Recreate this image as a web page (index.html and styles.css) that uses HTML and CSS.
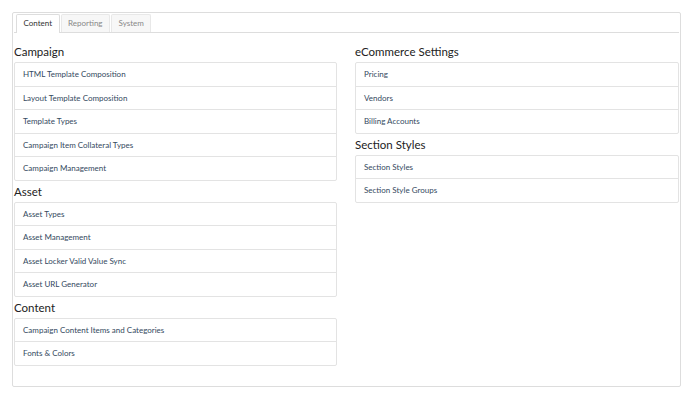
FILE: index.html
```html
<!DOCTYPE html>
<html lang="en">
<head>
    <meta charset="UTF-8">
    <title>Settings</title>
    <link rel="stylesheet" href="styles.css">
</head>
<body>
    <div class="panel">
        <!-- Tabs -->
        <ul class="tabs">
            <li class="tab active">Content</li>
            <li class="tab">Reporting</li>
            <li class="tab">System</li>
        </ul>

        <div class="columns">
            <div class="column">
                <h4 class="group-title">Campaign</h4>
                <div class="list-group">
                    <a class="list-item">HTML Template Composition</a>
                    <a class="list-item">Layout Template Composition</a>
                    <a class="list-item">Template Types</a>
                    <a class="list-item">Campaign Item Collateral Types</a>
                    <a class="list-item">Campaign Management</a>
                </div>
                <h4 class="group-title">Asset</h4>
                <div class="list-group">
                    <a class="list-item">Asset Types</a>
                    <a class="list-item">Asset Management</a>
                    <a class="list-item">Asset Locker Valid Value Sync</a>
                    <a class="list-item">Asset URL Generator</a>
                </div>
                <h4 class="group-title">Content</h4>
                <div class="list-group">
                    <a class="list-item">Campaign Content Items and Categories</a>
                    <a class="list-item">Fonts &amp; Colors</a>
                </div>
            </div>

            <div class="column">
                <h4 class="group-title">eCommerce Settings</h4>
                <div class="list-group">
                    <a class="list-item">Pricing</a>
                    <a class="list-item">Vendors</a>
                    <a class="list-item">Billing Accounts</a>
                </div>
                <h4 class="group-title">Section Styles</h4>
                <div class="list-group">
                    <a class="list-item">Section Styles</a>
                    <a class="list-item">Section Style Groups</a>
                </div>
            </div>
        </div>
    </div>
</body>
</html>
```

FILE: styles.css
```css
/* Basic reset */
* {
    margin: 0;
    padding: 0;
    box-sizing: border-box;
}

body {
    font-family: Lato, "Open Sans", sans-serif;
    background-color: #fff;
    color: #333;
    padding: 12px 7px 10px 12px;
}

/* Outer panel */
.panel {
    border: 1px solid #ddd;
    border-radius: 2px;
    height: 375px;
    padding: 1px 1px 0 1px;
}

/* Tabs */
.tabs {
    list-style: none;
    display: flex;
    align-items: flex-start;
    border-bottom: 1px solid #ddd;
    padding-left: 2px;
    height: 19px;
}

.tab {
    font-size: 8px;
    color: #888;
    background-color: #f7f7f7;
    border: 1px solid #e8e8e8;
    border-bottom: none;
    border-radius: 2px 2px 0 0;
    padding: 0 6.5px;
    line-height: 17px;
    margin-right: 1px;
    height: 18px;
}

.tab.active {
    color: #333;
    background-color: #fff;
    border-color: #ddd;
    height: 19px;
    margin-bottom: -1px;
}

/* Columns */
.columns {
    display: grid;
    grid-template-columns: 323px 324px;
    column-gap: 18px;
    margin-top: 8px;
}

.group-title {
    font-size: 11.5px;
    font-weight: normal;
    color: #222;
    line-height: 21px;
    height: 21px;
}

/* List groups */
.list-group {
    border: 1px solid #e3e3e3;
    border-radius: 2px;
}

.list-item {
    display: block;
    font-size: 8px;
    color: #34495e;
    line-height: 12.5px;
    padding: 5px 9px 5px 8px;
    border-top: 1px solid #e3e3e3;
}

.list-item:first-child {
    border-top: none;
}
```
